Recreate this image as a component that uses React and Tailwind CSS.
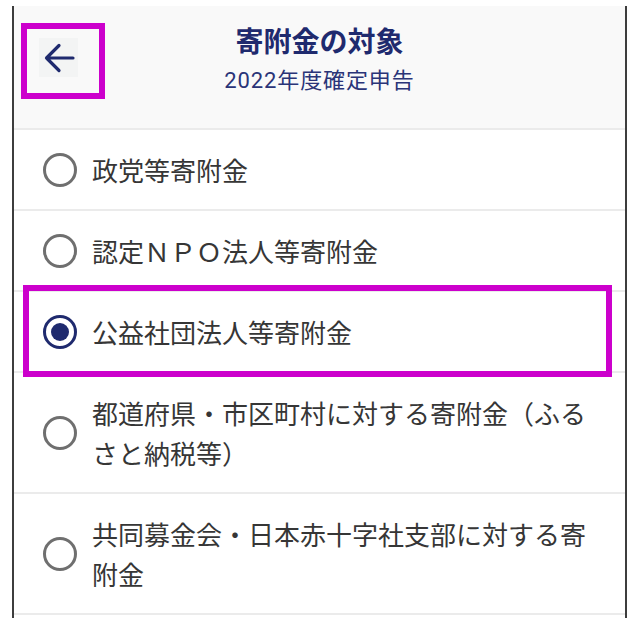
import React from 'react';

const OPTIONS = [
  { id: 'party', label: '政党等寄附金' },
  { id: 'npo', label: '認定ＮＰＯ法人等寄附金' },
  { id: 'public', label: '公益社団法人等寄附金' },
  { id: 'furusato', label: '都道府県・市区町村に対する寄附金（ふるさと納税等）' },
  { id: 'redcross', label: '共同募金会・日本赤十字社支部に対する寄附金' },
];

const JP = { fontFamily: '"Noto Sans CJK JP", "Noto Sans", sans-serif' };

function BackArrow() {
  return (
    <svg width="32" height="32" viewBox="0 0 32 32" fill="none" aria-hidden>
      <path
        d="M30 16H3.5M16 3.5L3.5 16L16 28.5"
        stroke="#1f2a6e"
        strokeWidth="3.2"
        strokeLinecap="round"
        strokeLinejoin="round"
      />
    </svg>
  );
}

function Radio({ checked }) {
  if (checked) {
    return (
      <span className="flex h-[34px] w-[34px] shrink-0 items-center justify-center rounded-full border-[3.5px] border-[#1f2a6e]">
        <span className="h-[18px] w-[18px] rounded-full bg-[#1f2a6e]" />
      </span>
    );
  }
  return <span className="h-[34px] w-[34px] shrink-0 rounded-full border-[3px] border-[#6f6f6f]" />;
}

function OptionRow({ label, checked }) {
  return (
    <div className="flex items-center gap-[15px] border-b-2 border-[#ebebeb] bg-white pl-[29px] pt-[20px] pb-[19px]">
      <Radio checked={checked} />
      <span className="w-[505px] text-[26px] leading-[40px] text-[#363636]" style={JP}>
        {label}
      </span>
    </div>
  );
}

export default function App() {
  const selected = 'public';

  return (
    <div className="relative h-[618px] w-[632px] overflow-hidden bg-white pt-[6px]">
      <div className="ml-[12px] h-[612px] w-[615px] overflow-hidden border-x-2 border-[#3d3d3d] bg-white">
        <header className="grid h-[124px] grid-cols-[1fr_auto_1fr] border-b-2 border-[#ebebeb] bg-[#f9f9f9]">
          <div className="pl-[25px] pt-[32px]">
            <button className="flex h-[39px] w-[39px] items-center justify-center bg-[#f3f4f4]">
              <BackArrow />
            </button>
          </div>
          <div className="flex flex-col items-center pt-[16px]" style={JP}>
            <h1 className="text-[28px] font-bold leading-[36px] text-[#1f2a6e]">寄附金の対象</h1>
            <p
              className="mt-[9px] text-[22px] leading-[28px] tracking-[0.04em] text-[#2a3478]"
              style={{ fontFamily: 'Roboto, "Noto Sans CJK JP", sans-serif' }}
            >
              2022年度確定申告
            </p>
          </div>
          <div />
        </header>

        {OPTIONS.map((o) => (
          <OptionRow key={o.id} label={o.label} checked={o.id === selected} />
        ))}
      </div>

      {/* annotation boxes */}
      <div className="pointer-events-none absolute left-[21px] top-[23px] h-[76px] w-[84px] border-[6px] border-[#cc00cc]" />
      <div className="pointer-events-none absolute left-[23px] top-[285px] h-[92px] w-[589px] border-[6px] border-[#cc00cc]" />
    </div>
  );
}
